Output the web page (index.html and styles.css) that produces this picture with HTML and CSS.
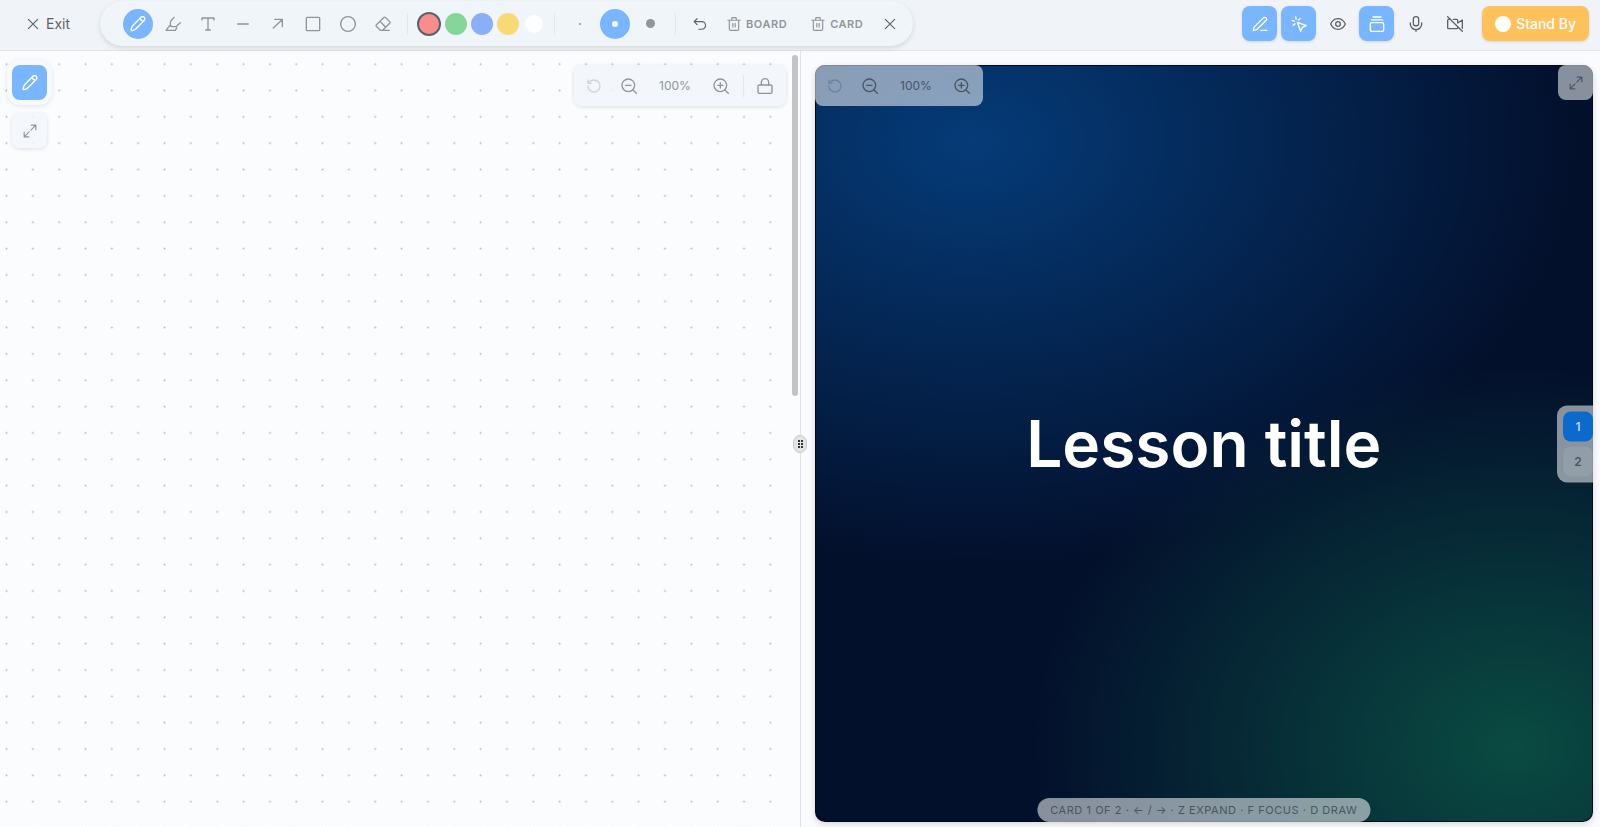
FILE: index.html
```html
<!DOCTYPE html>
<html lang="en">
<head>
  <meta charset="UTF-8" />
  <meta name="viewport" content="width=device-width, initial-scale=1.0"/>
  <title>Lesson title</title>
  <link rel="stylesheet" href="styles.css">
</head>
<body>
  <!-- Shared icons -->
  <svg class="sprite" aria-hidden="true">
    <symbol id="i-x" viewBox="0 0 24 24"><path d="M4 4l16 16M20 4L4 20"/></symbol>
    <symbol id="i-pencil" viewBox="0 0 24 24"><path d="M1.600 20.800l1.400-4.600a4 4 0 0 1 1-1.700L16.500 2a3.200 3.200 0 0 1 4.700 4.700L8.700 19.400a4 4 0 0 1-1.600 1l-3.700 1.500a1.400 1.400 0 0 1-1.800-1.100z"/><path d="M15.500 3c.2 2.800 2 4.600 4.700 4.700"/></symbol>
    <symbol id="i-marker" viewBox="0 0 24 24"><path d="M1.500 21.500h14l2.200-4M1.500 21.500l5.700-7.500M13.500 2L8.800 7.500a3 3 0 0 0-.7 2v3.500a3 3 0 0 0 3 3h4a3 3 0 0 0 2-.800L23 10"/></symbol>
    <symbol id="i-text" viewBox="0 0 24 24"><path d="M3 6V3h18v3M12 3v18M8.500 21h7"/></symbol>
    <symbol id="i-minus" viewBox="0 0 24 24"><path d="M4 12h16"/></symbol>
    <symbol id="i-arrow" viewBox="0 0 24 24"><path d="M5 18L18 5.500M7 5h11.500v11"/></symbol>
    <symbol id="i-square" viewBox="0 0 24 24"><rect x="2" y="2" width="20" height="20" rx="1.500"/></symbol>
    <symbol id="i-circle" viewBox="0 0 24 24"><circle cx="12" cy="12" r="11"/></symbol>
    <symbol id="i-eraser" viewBox="0 0 24 24"><path d="M8 21.500l-5.800-5.800a1.800 1.800 0 0 1 0-2.600L13.200 2.200a1.800 1.800 0 0 1 2.600 0l6.200 6.200a1.800 1.800 0 0 1 0 2.600L11.500 21.500M8 21.500h13.500M7.500 8l8.600 8.900"/></symbol>
    <symbol id="i-undo" viewBox="0 0 24 24"><path d="M7 3L2 8l5 5M2 8h13a6.500 6.500 0 0 1 0 13H10"/></symbol>
    <symbol id="i-trash" viewBox="0 0 24 24"><path d="M1.500 5.500h21M4 5.500V21a2 2 0 0 0 2 2h12a2 2 0 0 0 2-2V5.500M8 5.500v-3A1.500 1.500 0 0 1 9.500 1h5A1.500 1.500 0 0 1 16 2.500v3M10 11v6M14 11v6"/></symbol>
    <symbol id="i-pen-line" viewBox="0 0 24 24"><path d="M13 21.500h9.500M17 2.800a2.700 2.700 0 0 1 4 4L7 20.500 1.800 22l1.400-5.300z"/></symbol>
    <symbol id="i-click" viewBox="0 0 24 24"><path d="M9.500 9.500L23 14.500l-6 2.500-2.500 6zM7 1.500L7.800 5M1.500 7L5 7.800M6 11.500L3.500 14M13.800 3.500L11.500 6"/></symbol>
    <symbol id="i-eye" viewBox="0 0 24 24"><path d="M1 12S4.800 4 12 4s11 8 11 8-3.800 8-11 8S1 12 1 12z"/><circle cx="12" cy="12" r="3.500"/></symbol>
    <symbol id="i-stack" viewBox="0 0 24 24"><rect x="2" y="10" width="20" height="13" rx="2"/><path d="M3.500 5.700h17M6 1.500h12"/></symbol>
    <symbol id="i-mic" viewBox="0 0 24 24"><rect x="8" y="1" width="8" height="14" rx="4"/><path d="M3.500 10.500V12a8.500 8.500 0 0 0 17 0v-1.500M12 20.500V23"/></symbol>
    <symbol id="i-video-off" viewBox="0 0 24 24"><path d="M1 1l22 22M9.500 5h5A1.500 1.500 0 0 1 16 6.500v4l7-4.500v12.500M4.500 5h-2A1.500 1.500 0 0 0 1 6.500v11A1.500 1.500 0 0 0 2.500 19h12a1.500 1.500 0 0 0 1.500-1.500v-1.300"/></symbol>
    <symbol id="i-expand" viewBox="0 0 24 24"><path d="M14 2h8v8M22 2l-8.500 8.500M10 22H2v-8M2 22l8.500-8.500"/></symbol>
    <symbol id="i-reset" viewBox="0 0 24 24"><path d="M3 12a9 9 0 1 0 9-9 9.800 9.800 0 0 0-6.700 2.700L3 8M3 3v5h5"/></symbol>
    <symbol id="i-zoom-out" viewBox="0 0 24 24"><circle cx="11" cy="11" r="9.500"/><path d="M23 23l-5-5M7 11h8"/></symbol>
    <symbol id="i-zoom-in" viewBox="0 0 24 24"><circle cx="11" cy="11" r="9.500"/><path d="M23 23l-5-5M7 11h8M11 7v8"/></symbol>
    <symbol id="i-lock" viewBox="0 0 24 24"><rect x="1.500" y="10.500" width="21" height="12.500" rx="2"/><path d="M6.500 10.500V6.500a5.500 5.500 0 0 1 11 0v4"/></symbol>
  </svg>

  <header class="topbar">
    <button class="exit-btn"><svg class="icon icon-sm"><use href="#i-x"/></svg>Exit</button>

    <div class="toolbar" role="toolbar" aria-label="Drawing tools">
      <div class="group tools">
        <button class="tool active" aria-label="Pen"><svg class="icon"><use href="#i-pencil"/></svg></button>
        <button class="tool" aria-label="Highlighter"><svg class="icon"><use href="#i-marker"/></svg></button>
        <button class="tool" aria-label="Text"><svg class="icon"><use href="#i-text"/></svg></button>
        <button class="tool" aria-label="Line"><svg class="icon"><use href="#i-minus"/></svg></button>
        <button class="tool" aria-label="Arrow"><svg class="icon"><use href="#i-arrow"/></svg></button>
        <button class="tool" aria-label="Rectangle"><svg class="icon"><use href="#i-square"/></svg></button>
        <button class="tool" aria-label="Ellipse"><svg class="icon"><use href="#i-circle"/></svg></button>
        <button class="tool" aria-label="Eraser"><svg class="icon"><use href="#i-eraser"/></svg></button>
      </div>
      <span class="divider"></span>
      <div class="group swatches">
        <button class="swatch red selected" aria-label="Red"></button>
        <button class="swatch green" aria-label="Green"></button>
        <button class="swatch blue" aria-label="Blue"></button>
        <button class="swatch yellow" aria-label="Yellow"></button>
        <button class="swatch white" aria-label="White"></button>
      </div>
      <span class="divider"></span>
      <div class="group sizes">
        <button class="tool" aria-label="Thin"><span class="dot dot-s"></span></button>
        <button class="tool active" aria-label="Medium"><span class="dot dot-m"></span></button>
        <button class="tool" aria-label="Thick"><span class="dot dot-l"></span></button>
      </div>
      <span class="divider"></span>
      <div class="group actions">
        <button class="tool dark" aria-label="Undo"><svg class="icon icon-sm"><use href="#i-undo"/></svg></button>
        <button class="clear-btn"><svg class="icon icon-sm"><use href="#i-trash"/></svg>BOARD</button>
        <button class="clear-btn"><svg class="icon icon-sm"><use href="#i-trash"/></svg>CARD</button>
        <button class="tool dark" aria-label="Close toolbar"><svg class="icon icon-sm"><use href="#i-x"/></svg></button>
      </div>
    </div>

    <div class="session">
      <div class="group session-icons">
        <button class="icon-btn active" aria-label="Draw"><svg class="icon"><use href="#i-pen-line"/></svg></button>
        <button class="icon-btn active" aria-label="Pointer"><svg class="icon"><use href="#i-click"/></svg></button>
        <button class="icon-btn" aria-label="Preview"><svg class="icon"><use href="#i-eye"/></svg></button>
        <button class="icon-btn active" aria-label="Cards"><svg class="icon"><use href="#i-stack"/></svg></button>
        <button class="icon-btn" aria-label="Microphone"><svg class="icon"><use href="#i-mic"/></svg></button>
        <button class="icon-btn" aria-label="Camera off"><svg class="icon"><use href="#i-video-off"/></svg></button>
      </div>
      <button class="standby-btn"><span class="status-dot"></span>Stand By</button>
    </div>
  </header>

  <main class="workspace">
    <section class="board" aria-label="Board">
      <svg class="dot-grid" aria-hidden="true">
        <defs>
          <pattern id="dots" x="-6.700" y="0" width="26.340" height="26.340" patternUnits="userSpaceOnUse">
            <circle cx="13.200" cy="13.200" r="1" fill="#b6b9be"/>
          </pattern>
        </defs>
        <rect width="100%" height="100%" fill="url(#dots)"/>
      </svg>
      <div class="board-side">
        <div class="side-frame">
          <button class="icon-btn active" aria-label="Draw on board"><svg class="icon"><use href="#i-pencil"/></svg></button>
        </div>
        <button class="icon-btn raised" aria-label="Expand board"><svg class="icon icon-sm"><use href="#i-expand"/></svg></button>
      </div>
      <div class="zoom-bar board-zoom">
        <button class="zoom-btn" aria-label="Reset zoom" disabled><svg class="icon"><use href="#i-reset"/></svg></button>
        <button class="zoom-btn" aria-label="Zoom out"><svg class="icon"><use href="#i-zoom-out"/></svg></button>
        <span class="zoom-value">100%</span>
        <button class="zoom-btn" aria-label="Zoom in"><svg class="icon"><use href="#i-zoom-in"/></svg></button>
        <span class="divider"></span>
        <button class="zoom-btn" aria-label="Lock board"><svg class="icon"><use href="#i-lock"/></svg></button>
      </div>
      <span class="scroll-thumb"></span>
    </section>

    <div class="splitter">
      <button class="grip" aria-label="Resize panes">
        <svg viewBox="0 0 5 8" width="5" height="8"><path d="M0 0h2v2H0zM3 0h2v2H3zM0 3h2v2H0zM3 3h2v2H3zM0 6h2v2H0zM3 6h2v2H3z"/></svg>
      </button>
    </div>

    <section class="stage" aria-label="Card">
      <div class="slide">
        <h1>Lesson title</h1>
        <div class="zoom-bar slide-zoom">
          <button class="zoom-btn" aria-label="Reset card zoom" disabled><svg class="icon"><use href="#i-reset"/></svg></button>
          <button class="zoom-btn" aria-label="Zoom card out"><svg class="icon"><use href="#i-zoom-out"/></svg></button>
          <span class="zoom-value">100%</span>
          <button class="zoom-btn" aria-label="Zoom card in"><svg class="icon"><use href="#i-zoom-in"/></svg></button>
        </div>
        <button class="icon-btn slide-expand" aria-label="Expand card"><svg class="icon icon-sm"><use href="#i-expand"/></svg></button>
        <nav class="pager" aria-label="Cards">
          <button class="page current">1</button>
          <button class="page">2</button>
        </nav>
        <p class="hint">CARD 1 OF 2 · ← / → · Z EXPAND · F FOCUS · D DRAW</p>
      </div>
    </section>
  </main>
</body>
</html>
```

FILE: styles.css
```css
:root {
  --primary: #7ab5ff;
  --bar: #f0f4f8;
  --line: #dfe2e7;
  --muted: #929598;
  --text: #606366;
}

* {
  box-sizing: border-box;
}

body {
  margin: 0;
  height: 100vh;
  display: flex;
  flex-direction: column;
  overflow: hidden;
  font-family: Inter, "Liberation Sans", sans-serif;
  font-size: 14px;
  background: #fbfcfe;
  color: var(--text);
}

button {
  display: flex;
  align-items: center;
  justify-content: center;
  margin: 0;
  padding: 0;
  border: none;
  background: none;
  color: inherit;
  font: inherit;
  cursor: pointer;
}

.sprite {
  position: absolute;
  width: 0;
  height: 0;
}

.icon {
  width: 16px;
  height: 16px;
  flex: none;
  fill: none;
  stroke: currentColor;
  stroke-width: 2;
  stroke-linecap: round;
  stroke-linejoin: round;
}

.icon-sm {
  width: 14px;
  height: 14px;
}

.group {
  display: flex;
  align-items: center;
}

.divider {
  width: 1px;
  height: 22px;
  background: #e2e7eb;
}

/* Top bar */
.topbar {
  flex: none;
  display: flex;
  align-items: center;
  height: 51px;
  padding: 0 11px 3px 26px;
  background: var(--bar);
  border-bottom: 1px solid var(--line);
}

.exit-btn {
  gap: 6px;
}

.toolbar {
  display: flex;
  align-items: center;
  height: 45px;
  margin-left: 30px;
  padding: 0 8px 0 23px;
  border-radius: 23px;
  background: #f0f5f9;
  box-shadow: 0 2px 5px rgba(0, 0, 0, 0.12);
  color: var(--muted);
  position: relative;
  z-index: 2;
}

.tools,
.sizes {
  gap: 5px;
}

.tools {
  margin-right: 9px;
}

.sizes {
  margin: 0 10px;
}

.tool {
  width: 30px;
  height: 30px;
  border-radius: 50%;
}

.tool.active,
.icon-btn.active {
  background: var(--primary);
  color: #fff;
}

.tool.dark {
  color: var(--text);
}

.swatches {
  gap: 4px;
  margin: 0 9px;
}

.swatch {
  width: 22px;
  height: 22px;
  border-radius: 50%;
}

.swatch.selected {
  width: 24px;
  height: 24px;
  border: 2px solid #586270;
}

.red { background: #f88d8b; }
.green { background: #86d69b; }
.blue { background: #8aaff7; }
.yellow { background: #f8d977; }
.white { background: #fdfeff; }

.swatch.white {
  width: 18px;
  height: 18px;
  margin: 0 2px;
}

.dot {
  border-radius: 50%;
  background: currentColor;
}

.dot-s {
  width: 2px;
  height: 2px;
}

.dot-m {
  width: 6px;
  height: 6px;
}

.dot-l {
  width: 9px;
  height: 9px;
}

.actions {
  margin-left: 9px;
}

.clear-btn {
  height: 30px;
  padding: 0 12px;
  gap: 5px;
  font-size: 11px;
  font-weight: 600;
  letter-spacing: 0.05em;
}

.session {
  display: flex;
  align-items: center;
  gap: 10px;
  margin-left: auto;
}

.session-icons {
  gap: 4px;
}

.icon-btn {
  width: 35px;
  height: 35px;
  border-radius: 8px;
}

.session .active,
.standby-btn {
  box-shadow: 0 1px 3px rgba(0, 0, 0, 0.12);
}

.standby-btn {
  height: 35px;
  padding: 0 13px;
  gap: 5px;
  border-radius: 8px;
  background: #ffc15c;
  color: #fff;
  font-weight: 500;
}

.status-dot {
  width: 16px;
  height: 16px;
  border-radius: 50%;
  background: #fff;
}

/* Board */
.workspace {
  flex: 1;
  display: flex;
  min-height: 0;
}

.board {
  flex: 1;
  min-width: 0;
  display: flex;
  justify-content: space-between;
  align-items: flex-start;
  position: relative;
  padding: 9px 14px 0 7px;
}

.dot-grid {
  position: absolute;
  top: 0;
  left: 0;
  width: calc(100% - 14px);
  height: 100%;
}

.board-side {
  position: relative;
  display: flex;
  flex-direction: column;
  align-items: center;
  gap: 8px;
}

.side-frame {
  padding: 5px;
  border-radius: 13px;
  background: #f8f9fb;
  box-shadow: 0 1px 5px rgba(0, 0, 0, 0.1);
}

.raised {
  background: rgba(242, 246, 250, 0.85);
  color: var(--muted);
  box-shadow: 0 1px 4px rgba(0, 0, 0, 0.12);
}

.zoom-bar {
  display: flex;
  align-items: center;
  height: 41px;
  padding: 0 3px;
  border-radius: 8px;
}

.zoom-btn {
  width: 35px;
  height: 35px;
}

.zoom-btn:disabled {
  opacity: 0.35;
  cursor: default;
}

.zoom-value {
  width: 57px;
  text-align: center;
  font-size: 12px;
}

.board-zoom {
  position: relative;
  margin-top: 5px;
  background: rgba(241, 245, 249, 0.85);
  box-shadow: 0 1px 4px rgba(0, 0, 0, 0.12);
  color: var(--muted);
}

.board-zoom .divider {
  margin: 0 4px;
}

.scroll-thumb {
  position: absolute;
  top: 4px;
  right: 2px;
  width: 6px;
  height: 44%;
  border-radius: 3px;
  background: #c3c4c7;
}

/* Splitter */
.splitter {
  flex: none;
  width: 1px;
  display: flex;
  align-items: center;
  justify-content: center;
  padding-top: 9px;
  background: #e0e2e6;
}

.grip {
  flex: none;
  position: relative;
  z-index: 1;
  width: 14px;
  height: 18px;
  border: 1px solid #c9cacc;
  border-radius: 7px;
  background: #e3e4e6;
}

.grip svg {
  fill: #333;
}

/* Card */
.stage {
  flex: 1;
  min-width: 0;
  display: flex;
  padding: 14px 7px 5px 14px;
  background: #fafbfe;
}

.slide {
  flex: 1;
  display: flex;
  align-items: center;
  justify-content: center;
  position: relative;
  overflow: hidden;
  border-radius: 10px;
  background:
    radial-gradient(ellipse 78% 56% at 20% 10%, #053b78 0%, rgba(5, 59, 120, 0) 100%),
    radial-gradient(ellipse 62% 50% at 90% 90%, #0a4b42 0%, rgba(10, 75, 66, 0) 100%),
    #03102c;
  box-shadow: inset 0 0 0 1px #020815, 0 2px 6px rgba(0, 0, 0, 0.15);
}

.slide h1 {
  margin: 0;
  font-size: 64px;
  line-height: 72px;
  font-weight: 600;
  color: #fff;
}

.slide-zoom,
.slide-expand,
.pager,
.hint {
  position: absolute;
  background: rgba(240, 244, 248, 0.56);
  color: #4a5563;
}

.slide-zoom {
  top: 0;
  left: 0;
}

.slide-expand {
  top: 0;
  right: 0;
}

.pager {
  top: 50%;
  right: 0;
  transform: translateY(-50%);
  display: flex;
  flex-direction: column;
  gap: 5px;
  padding: 6px 0 6px 6px;
  border-radius: 10px 0 0 10px;
}

.page {
  width: 30px;
  height: 30px;
  border-radius: 8px;
  background: rgba(255, 255, 255, 0.08);
  font-size: 12px;
  font-weight: 600;
}

.page.current {
  background: #0b6acb;
  color: #b9d4f0;
}

.hint {
  bottom: 0;
  left: 50%;
  transform: translateX(-50%);
  margin: 0;
  padding: 0 13px;
  border-radius: 12px;
  font-size: 11px;
  line-height: 24px;
  letter-spacing: 0.05em;
  white-space: nowrap;
}
```
